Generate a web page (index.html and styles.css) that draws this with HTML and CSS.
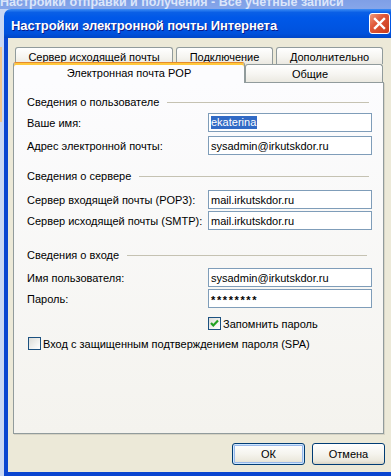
FILE: index.html
```html
<!DOCTYPE html>
<html lang="ru">
<head>
<meta charset="utf-8">
<title>Настройки электронной почты Интернета</title>
<link rel="stylesheet" href="styles.css">
</head>
<body>
<div class="bgwin">
  <div class="bgtitle"><span>Настройки отправки и получения - Все учетные записи</span></div>
  <div class="bgbody"><div class="bgaccent"></div></div>
</div>

<div class="dialog">
  <div class="titlebar">
    <span class="title">Настройки электронной почты Интернета</span>
    <div class="close">
      <svg width="21" height="21" viewBox="0 0 21 21"><path d="M6 6 L15 15 M15 6 L6 15" stroke="#fff" stroke-width="2.4" stroke-linecap="square"/></svg>
    </div>
  </div>
  <div class="frame">
    <div class="tabs">
      <div class="tabrow back">
        <div class="tab w1">Сервер исходящей почты</div>
        <div class="tab w2">Подключение</div>
        <div class="tab w3">Дополнительно</div>
      </div>
      <div class="tabrow front">
        <div class="tab sel">Электронная почта POP</div>
        <div class="tab w5">Общие</div>
      </div>
    </div>
    <div class="panel">
      <div class="ghead g1"><span>Сведения о пользователе</span><i class="gline"></i></div>
      <div class="row r-first"><span class="lbl">Ваше имя:</span><div class="field"><span class="selected">ekaterina</span></div></div>
      <div class="row r-near4"><span class="lbl">Адрес электронной почты:</span><div class="field">sysadmin@irkutskdor.ru</div></div>

      <div class="ghead g2"><span>Сведения о сервере</span><i class="gline"></i></div>
      <div class="row r-first2"><span class="lbl">Сервер входящей почты (POP3):</span><div class="field">mail.irkutskdor.ru</div></div>
      <div class="row r-near2"><span class="lbl">Сервер исходящей почты (SMTP):</span><div class="field">mail.irkutskdor.ru</div></div>

      <div class="ghead g3"><span>Сведения о входе</span><i class="gline short"></i></div>
      <div class="row r-first3"><span class="lbl">Имя пользователя:</span><div class="field">sysadmin@irkutskdor.ru</div></div>
      <div class="row r-near2"><span class="lbl">Пароль:</span><div class="field pwd">********</div></div>

      <div class="check c1">
        <span class="box"><svg width="11" height="11" viewBox="0 0 11 11"><path d="M2 5 L4.3 7.5 L9 2.5" fill="none" stroke="#21a121" stroke-width="2.2"/></svg></span>
        <span>Запомнить пароль</span>
      </div>
      <div class="check c2">
        <span class="box"></span>
        <span>Вход с защищенным подтверждением пароля (SPA)</span>
      </div>
    </div>
    <div class="buttons">
      <div class="btn default">ОК</div>
      <div class="btn">Отмена</div>
    </div>
  </div>
</div>
</body>
</html>
```

FILE: styles.css
```css
* { box-sizing: border-box; }
html, body { margin: 0; padding: 0; }
body {
  width: 391px;
  height: 476px;
  overflow: hidden;
  position: relative;
  background: #3a6ea5;
  font-family: "Liberation Sans", Arial, sans-serif;
  font-size: 11px;
  color: #000;
}

/* background window */
.bgwin {
  position: absolute;
  left: 0;
  top: 0;
  width: 391px;
  height: 476px;
  display: flex;
  flex-direction: column;
  overflow: hidden;
}
.bgtitle {
  height: 9px;
  overflow: hidden;
  background: linear-gradient(#7f9fe6, #86a6ea);
  color: #dce6fa;
  font-weight: bold;
  font-size: 12.5px;
  white-space: nowrap;
}
.bgtitle span {
  display: block;
  line-height: 5px;
  padding-left: 0;
}
.bgbody {
  flex: 1;
  background: #c9d7f3;
}
.bgaccent {
  margin-top: 38px;
  width: 2px;
  height: 75px;
  background: #f0c48c;
}

/* dialog */
.dialog {
  position: absolute;
  left: 4px;
  top: 9px;
  width: 387px;
  height: 467px;
  display: flex;
  flex-direction: column;
}
.titlebar {
  height: 29px;
  border-radius: 7px 0 0 0;
  background: linear-gradient(#3c8df5 0%, #0a5fe6 12%, #0058e8 30%, #0055e2 60%, #0051dc 85%, #0046c6 100%);
  display: flex;
  align-items: center;
  justify-content: space-between;
  padding: 1px 1px 0 7px;
}
.title {
  color: #fff;
  font-weight: bold;
  font-size: 13px;
  letter-spacing: -0.1px;
  text-shadow: 1px 1px #0a1a8a;
  padding-top: 2px;
}
.close {
  width: 21px;
  height: 21px;
  border: 1px solid #fff;
  border-radius: 3px;
  background: linear-gradient(135deg, #f09a7c 0%, #e0583a 40%, #c73a1c 100%);
  display: flex;
  align-items: center;
  justify-content: center;
  margin-top: -1px;
}
.close svg { display: block; margin: -1px; }

.frame {
  flex: 1;
  background: #ece9d8;
  border-left: 4px solid #0a45d0;
  border-bottom: 4px solid #0a45d0;
  padding: 9px 7px 7px 5px;
  display: flex;
  flex-direction: column;
}

/* tabs */
.tabs { display: flex; flex-direction: column; }
.tabrow { display: flex; }
.tabrow.back { height: 17px; padding-left: 2px; gap: 3px; }
.tabrow.front { height: 18px; align-items: flex-end; }
.tab {
  border: 1px solid #919b9c;
  border-bottom: none;
  border-radius: 3px 3px 0 0;
  background: linear-gradient(#ffffff, #f6f5f1 55%, #ebe9e1);
  display: flex;
  align-items: center;
  justify-content: center;
  white-space: nowrap;
}
.back .tab { height: 17px; padding-top: 1px; }
.w1 { width: 158px; }
.w2 { width: 97px; }
.w3 { width: 107px; }
.w5 { width: 138px; height: 18px; padding: 1px 8px 0 0; }
.tab.sel {
  width: 232px;
  height: 21px;
  margin-bottom: -1px;
  position: relative;
  z-index: 1;
  background: #fcfcfe;
  border-top: 1px solid #e68b2c;
  box-shadow: inset 0 2px 0 #ffc83c;
  padding-bottom: 1px;
}

/* panel */
.panel {
  height: 352px;
  border: 1px solid #919b9c;
  background: linear-gradient(#fcfcfe, #f4f3ee);
  box-shadow: 1px 1px 0 #d6d3c4;
  padding: 12px 11px 0 13px;
  display: flex;
  flex-direction: column;
}
.ghead {
  height: 14px;
  display: flex;
  align-items: center;
  gap: 8px;
  margin-right: 3px;
}
.gline {
  flex: 1;
  height: 1px;
  background: #c5c2b2;
}
.gline.short { margin-right: 2px; }
.g2 { margin-top: 14px; }
.g3 { margin-top: 18px; }

.row {
  height: 19px;
  display: flex;
  align-items: center;
}
.r-first { margin-top: 4px; }
.r-near4 { margin-top: 4px; }
.r-first2 { margin-top: 7px; }
.r-first3 { margin-top: 6px; }
.r-near2 { margin-top: 2px; }
.lbl { flex: 1; padding-top: 1px; }
.field {
  width: 164px;
  height: 19px;
  border: 1px solid #7f9db9;
  background: #fff;
  padding: 0 2px;
  display: flex;
  align-items: center;
  white-space: nowrap;
}
.selected {
  background: #316ac5;
  color: #fff;
  line-height: 13px;
  padding: 0 1px 0 0;
}
.pwd { letter-spacing: 1.6px; font-weight: bold; padding-top: 3px; }

.check {
  display: flex;
  align-items: center;
  gap: 2px;
  height: 13px;
}
.c1 { margin-top: 9px; margin-left: 181px; }
.c2 { margin-top: 7px; margin-left: 1px; }
.box {
  width: 13px;
  height: 13px;
  border: 1px solid #1c5180;
  background: linear-gradient(135deg, #dcdcd7, #f6f6f4 70%, #ffffff);
  display: flex;
  align-items: center;
  justify-content: center;
}
.box svg { display: block; }

/* buttons */
.buttons {
  display: flex;
  justify-content: flex-end;
  gap: 7px;
  margin-top: 9px;
  margin-right: -1px;
}
.btn {
  width: 73px;
  height: 22px;
  border: 1px solid #003c74;
  border-radius: 3px;
  background: linear-gradient(#ffffff, #f5f4ee 50%, #ebe8dc 85%, #d8d3c4);
  display: flex;
  align-items: center;
  justify-content: center;
}
.btn.default {
  box-shadow: inset 0 0 0 1px #cee7ff, inset 0 0 0 2px #98b8ea;
}
```
